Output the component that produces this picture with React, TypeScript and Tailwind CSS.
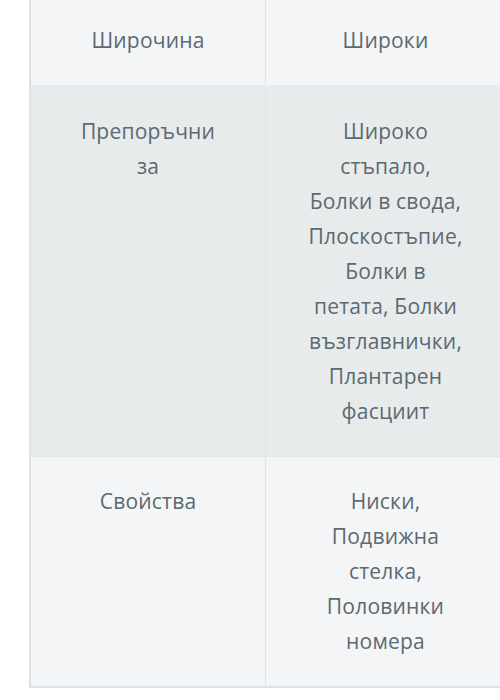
const rows = [
  {
    label: ["Широчина"],
    value: ["Широки"],
    bg: "bg-[#f3f5f7]",
  },
  {
    label: ["Препоръчни", "за"],
    value: [
      "Широко",
      "стъпало,",
      "Болки в свода,",
      "Плоскостъпие,",
      "Болки в",
      "петата, Болки",
      "възглавнички,",
      "Плантарен",
      "фасциит",
    ],
    bg: "bg-[#e8ebeb]",
  },
  {
    label: ["Свойства"],
    value: ["Ниски,", "Подвижна", "стелка,", "Половинки", "номера"],
    bg: "bg-[#f3f5f6]",
  },
];

const App = () => {
  return (
    <div className="w-[500px] h-[700px] overflow-hidden bg-white">
      <div
        className="ml-[29px] -mt-[4px] w-[476px] border-l-2 border-b-2 border-[#dce2e5] text-[21px] leading-[35px] tracking-[0.2px] text-[#5b6971] text-center"
        style={{ fontFamily: '"Open Sans", "Noto Sans", sans-serif' }}
      >
        {rows.map((row, i) => (
          <div
            key={i}
            className={`grid grid-cols-[235px_1fr] ${row.bg} ${
              i === 0 ? "border-b-2 border-[#e4ecf2]" : ""
            } ${i === 1 ? "border-b border-[#e2e7ea]" : ""}`}
          >
            <div className="py-[27px] border-r border-[#dfe4e7]">
              {row.label.map((l, j) => (
                <div key={j}>{l}</div>
              ))}
            </div>
            <div className="py-[27px]">
              {row.value.map((v, j) => (
                <div key={j}>{v}</div>
              ))}
            </div>
          </div>
        ))}
      </div>
    </div>
  );
};

export default App;
